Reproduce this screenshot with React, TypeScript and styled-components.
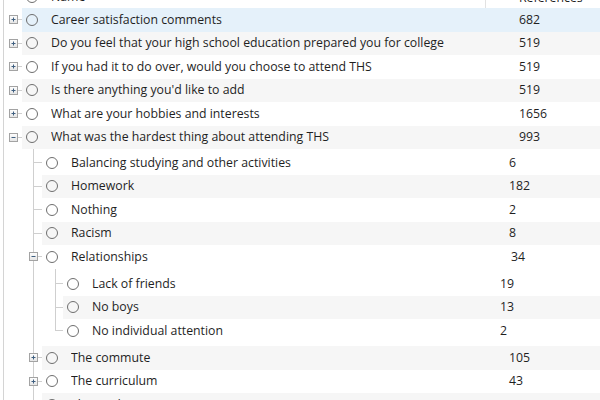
import React from "react";
import styled, { createGlobalStyle } from "styled-components";

const GlobalStyle = createGlobalStyle`
  html, body {
    margin: 0;
    padding: 0;
    background: #ffffff;
    overflow: hidden;
  }
  body {
    font-family: "Segoe UI", "Open Sans", "Noto Sans", sans-serif;
    font-size: 12.3px;
    color: #1f1f1f;
  }
`;

const LINE = "#cfcfcf";

const Frame = styled.div`
  width: 596px;
  height: 420px;
  margin: -14px 0 0 3px;
  border-left: 1px solid #d4d4d4;
  overflow: hidden;
`;

const HeaderRow = styled.div`
  display: flex;
  align-items: center;
  height: 22px;
  background: #ffffff;
`;

const Row = styled.div`
  display: flex;
  align-items: stretch;
  height: 23.5px;
`;

const Gutter = styled.div<{ $width: number }>`
  flex: 0 0 ${(p) => p.$width}px;
  display: flex;
  align-items: center;
`;

const Spacer = styled.span<{ $width: number }>`
  flex: 0 0 ${(p) => p.$width}px;
`;

const Connector = styled.span`
  flex: 1;
  height: 1px;
  background: ${LINE};
`;

const Body = styled.div<{ $tone: "plain" | "stripe" | "selected" }>`
  flex: 1;
  display: flex;
  align-items: center;
  min-width: 0;
  background: ${(p) =>
    p.$tone === "selected" ? "#e5f1fa" : p.$tone === "stripe" ? "#f6f6f6" : "#ffffff"};
`;

const Circle = styled.span`
  flex: 0 0 auto;
  width: 10px;
  height: 10px;
  margin: 0 13px 0 4px;
  border: 1.6px solid #6e6e6e;
  border-radius: 50%;
`;

const Name = styled.span`
  flex: 1;
  white-space: nowrap;
  overflow: hidden;
  line-height: 16px;
`;

const Count = styled.span<{ $width: number }>`
  flex: 0 0 ${(p) => p.$width}px;
  white-space: nowrap;
  line-height: 16px;
`;

const HeaderCount = styled.span`
  flex: 0 0 81px;
  display: flex;
  align-items: center;
  white-space: nowrap;
`;

const Separator = styled.span`
  width: 1px;
  height: 22px;
  margin-right: 33px;
  background: #e2e2e2;
`;

const Group = styled.div<{ $lineX: number; $pad: string; $lineHeight: string }>`
  padding: ${(p) => p.$pad};
  background-image: linear-gradient(${LINE}, ${LINE});
  background-repeat: no-repeat;
  background-size: 1px ${(p) => p.$lineHeight};
  background-position: ${(p) => p.$lineX}px 0;
`;

const Expander = ({ open }: { open: boolean }) => (
  <svg width="9" height="9" viewBox="0 0 9 9" style={{ flex: "0 0 9px" }}>
    <defs>
      <linearGradient id="exp" x1="0" y1="0" x2="0" y2="1">
        <stop offset="0" stopColor="#ffffff" />
        <stop offset="1" stopColor="#e4e4e4" />
      </linearGradient>
    </defs>
    <rect x="0.5" y="0.5" width="8" height="8" fill="url(#exp)" stroke="#a3a3a3" />
    <line x1="2.5" y1="4.5" x2="6.5" y2="4.5" stroke="#3f5f80" />
    {!open && <line x1="4.5" y1="2.5" x2="4.5" y2="6.5" stroke="#3f5f80" />}
  </svg>
);

type Tone = "plain" | "stripe" | "selected";

type NodeRowProps = {
  gutter: number;
  lead: number;
  expander?: "open" | "closed";
  line?: boolean;
  tone: Tone;
  name: string;
  count: string;
  countWidth: number;
};

const NodeRow = ({ gutter, lead, expander, line, tone, name, count, countWidth }: NodeRowProps) => (
  <Row>
    <Gutter $width={gutter}>
      <Spacer $width={lead} />
      {expander && <Expander open={expander === "open"} />}
      {(expander || line) && <Connector />}
    </Gutter>
    <Body $tone={tone}>
      <Circle />
      <Name>{name}</Name>
      <Count $width={countWidth}>{count}</Count>
    </Body>
  </Row>
);

const topRows: { name: string; count: string; tone: Tone; expander: "open" | "closed" }[] = [
  { name: "Career satisfaction comments", count: "682", tone: "selected", expander: "closed" },
  { name: "Do you feel that your high school education prepared you for college", count: "519", tone: "stripe", expander: "closed" },
  { name: "If you had it to do over, would you choose to attend THS", count: "519", tone: "plain", expander: "closed" },
  { name: "Is there anything you'd like to add", count: "519", tone: "stripe", expander: "closed" },
  { name: "What are your hobbies and interests", count: "1656", tone: "plain", expander: "closed" },
];

const hardestBefore = [
  { name: "Balancing studying and other activities", count: "6" },
  { name: "Homework", count: "182" },
  { name: "Nothing", count: "2" },
  { name: "Racism", count: "8" },
];

const relationships = [
  { name: "Lack of friends", count: "19" },
  { name: "No boys", count: "13" },
  { name: "No individual attention", count: "2" },
];

const hardestAfter = [
  { name: "The commute", count: "105" },
  { name: "The curriculum", count: "43" },
  { name: "The students", count: "11" },
];

const App = () => (
  <>
    <GlobalStyle />
    <Frame>
      <HeaderRow>
        <Gutter $width={18} />
        <Circle />
        <Name>Name</Name>
        <Separator />
        <HeaderCount>References</HeaderCount>
      </HeaderRow>

      {topRows.map((r) => (
        <NodeRow
          key={r.name}
          gutter={18}
          lead={5}
          expander={r.expander}
          tone={r.tone}
          name={r.name}
          count={r.count}
          countWidth={81}
        />
      ))}
      <NodeRow
        gutter={18}
        lead={5}
        expander="open"
        tone="stripe"
        name="What was the hardest thing about attending THS"
        count="993"
        countWidth={81}
      />

      <Group $lineX={29} $pad="2px 0 0" $lineHeight="100%">
        {hardestBefore.map((r, i) => (
          <NodeRow
            key={r.name}
            gutter={38}
            lead={29}
            line
            tone={i % 2 === 1 ? "stripe" : "plain"}
            name={r.name}
            count={r.count}
            countWidth={91}
          />
        ))}
        <NodeRow
          gutter={38}
          lead={25}
          expander="open"
          tone="plain"
          name="Relationships"
          count="34"
          countWidth={89}
        />
        <Group $lineX={51} $pad="3.5px 0" $lineHeight="calc(100% - 16px)">
          {relationships.map((r, i) => (
            <NodeRow
              key={r.name}
              gutter={59}
              lead={51}
              line
              tone={i % 2 === 1 ? "stripe" : "plain"}
              name={r.name}
              count={r.count}
              countWidth={100}
            />
          ))}
        </Group>
        {hardestAfter.map((r, i) => (
          <NodeRow
            key={r.name}
            gutter={38}
            lead={25}
            expander="closed"
            tone={i % 2 === 0 ? "stripe" : "plain"}
            name={r.name}
            count={r.count}
            countWidth={91}
          />
        ))}
      </Group>
    </Frame>
  </>
);

export default App;
